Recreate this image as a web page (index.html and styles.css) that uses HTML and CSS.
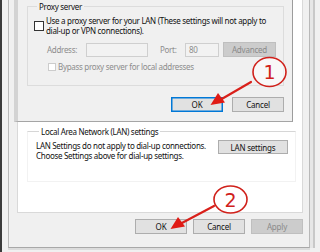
FILE: index.html
```html
<!DOCTYPE html>
<html>
<head>
<meta charset="utf-8">
<link rel="stylesheet" href="styles.css">
</head>
<body>
<div class="screen">
  <div class="window">
    <div class="tabpanel">
      <fieldset class="group lan-group">
        <legend>Local Area Network (LAN) settings</legend>
        <div class="lan-row">
          <p class="lan-text">LAN Settings do not apply to dial-up connections.<br>Choose Settings above for dial-up settings.</p>
          <button class="btn lan-btn">LAN settings</button>
        </div>
      </fieldset>
    </div>
    <div class="btnrow">
      <button class="btn">OK</button>
      <button class="btn">Cancel</button>
      <button class="btn disabled">Apply</button>
    </div>
  </div>

  <div class="dialog">
    <fieldset class="group proxy-group">
      <legend>Proxy server</legend>
      <div class="check-row">
        <span class="checkbox"></span>
        <span class="check-label">Use a proxy server for your LAN (These settings will not apply to<br>dial-up or VPN connections).</span>
      </div>
      <div class="addr-row">
        <span class="dim addr-label">Address:</span>
        <span class="input addr-input"></span>
        <span class="dim port-label">Port:</span>
        <span class="input port-input">80</span>
        <button class="btn disabled adv-btn">Advanced</button>
      </div>
      <div class="bypass-row">
        <span class="checkbox small dis"></span>
        <span class="dim">Bypass proxy server for local addresses</span>
      </div>
    </fieldset>
    <div class="dlg-btns">
      <button class="btn default">OK</button>
      <button class="btn">Cancel</button>
    </div>
  </div>

  <svg class="annot" width="320" height="252" viewBox="0 0 320 252">
    <ellipse cx="269.5" cy="72" rx="16.5" ry="14.5" fill="rgba(255,255,255,0.55)" stroke="#d0211b" stroke-width="1.6"/>
    <text x="269.5" y="79" text-anchor="middle" class="num">1</text>
    <line x1="251" y1="82" x2="220" y2="100" stroke="#d9201a" stroke-width="2.2" stroke-linecap="round"/>
    <polygon points="210.5,105 218,93 225,102.5" fill="#e01a14"/>

    <ellipse cx="230.5" cy="199.5" rx="16.5" ry="13.5" fill="rgba(255,255,255,0.55)" stroke="#d0211b" stroke-width="1.6"/>
    <text x="230.5" y="207" text-anchor="middle" class="num">2</text>
    <line x1="214" y1="206" x2="180" y2="224" stroke="#d9201a" stroke-width="2.2" stroke-linecap="round"/>
    <polygon points="170.5,229 178,217 185,226.5" fill="#e01a14"/>
  </svg>
</div>
</body>
</html>
```

FILE: styles.css
```css
* { box-sizing: border-box; }
html, body { margin: 0; padding: 0; }
body {
  width: 320px;
  height: 252px;
  overflow: hidden;
  font-family: "Noto Sans", "Open Sans", sans-serif;
  font-size: 8px;
  letter-spacing: -0.3px;
  color: #111;
}
.screen {
  position: relative;
  width: 320px;
  height: 252px;
  background: #f0f0f0;
  border-left: 2px solid #3a3a3a;
  overflow: hidden;
}
.window {
  margin-left: 6px;
  width: 302px;
  height: 248px;
  background: #f0f0f0;
  border-left: 1px solid #b8b8b8;
  border-right: 1px solid #b8b8b8;
  border-bottom: 1px solid #a8a8a8;
  box-shadow: 0 2px 0 #dcdcdc, 3px 0 0 #e6e6e6, 5px 0 0 #c8c8c8;
  padding: 0 6px 0 8px;
  display: flex;
  flex-direction: column;
}
.tabpanel {
  height: 213px;
  background: #fff;
  border: 1px solid #d9d9d9;
  border-top: none;
  padding: 127px 6px 0 9px;
}
.group {
  margin: 0;
  border: 1px solid #dcdcdc;
  padding: 0;
}
.group legend {
  padding: 0 2px;
  margin-left: 3px;
  line-height: 9px;
  height: 9px;
}
.lan-group {
  border-color: #d6d6d6 #f2f2f2 #f2f2f2 #f2f2f2;
  padding: 5px 7px 20px 8px;
}
.lan-row {
  display: flex;
  align-items: flex-start;
  justify-content: space-between;
}
.lan-text {
  margin: 0;
  line-height: 10px;
}
.btn {
  font-family: inherit;
  font-size: 8px;
  letter-spacing: -0.2px;
  color: #111;
  height: 15px;
  width: 52px;
  padding: 0;
  margin: 0;
  background: #e1e1e1;
  border: 1px solid #adadad;
  line-height: 13px;
}
.btn.disabled {
  background: #cccccc;
  border-color: #bfbfbf;
  color: #8a8a8a;
}
.btn.default {
  border-color: #0078d7;
  box-shadow: inset 0 0 0 0.5px #0078d7;
}
.lan-btn {
  width: 70px;
  height: 14px;
  margin-top: -1px;
}
.btnrow {
  display: flex;
  justify-content: flex-end;
  gap: 6px;
  margin-top: 6px;
}
.btnrow .btn { width: 52px; }

.dialog {
  position: absolute;
  left: 12px;
  top: -10px;
  width: 279px;
  height: 132px;
  background: #f0f0f0;
  border-left: 4px solid #d3d3d3;
  border-right: 1px solid #9c9c9c;
  border-bottom: 1px solid #a5a5a5;
  padding: 12px 8px 0 9px;
}
.proxy-group {
  height: 84px;
  padding: 5px 6px 0 6px;
}
.check-row {
  display: flex;
  gap: 2px;
  line-height: 9.5px;
}
.checkbox {
  flex: none;
  width: 10px;
  height: 10px;
  background: #fff;
  border: 1px solid #333;
  margin-top: 5px;
}
.checkbox.small {
  width: 8px;
  height: 8px;
  margin-top: 0;
}
.checkbox.dis {
  border-color: #cccccc;
}
.check-label { white-space: nowrap; }
.dim { color: #8d8d8d; }
.addr-row {
  display: flex;
  align-items: center;
  margin-top: 7px;
  padding-left: 13px;
  height: 15px;
}
.addr-label { width: 39px; }
.input {
  height: 14px;
  background: #f2f2f2;
  border: 1px solid #cfcfcf;
  color: #8d8d8d;
  line-height: 12px;
  padding-left: 3px;
}
.addr-input { width: 62px; margin-right: 12px; }
.port-label { width: 25px; }
.port-input { width: 34px; margin-right: 4px; }
.adv-btn { width: 53px; }
.bypass-row {
  display: flex;
  align-items: center;
  gap: 2px;
  margin-top: 5px;
  padding-left: 14px;
  line-height: 9px;
}
.dlg-btns {
  display: flex;
  justify-content: flex-end;
  gap: 9px;
  margin-top: 11px;
}
.annot {
  position: absolute;
  left: -2px;
  top: 0;
}
.num {
  font-family: "DejaVu Sans", sans-serif;
  font-size: 19px;
  fill: #d0211b;
  letter-spacing: 0;
}
```
